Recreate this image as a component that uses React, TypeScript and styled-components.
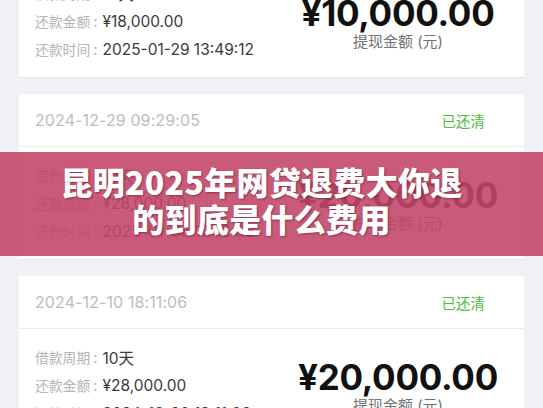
import React from 'react';
import styled, { createGlobalStyle } from 'styled-components';

const GlobalStyle = createGlobalStyle`
  html, body {
    margin: 0;
    padding: 0;
    background: #f0f1f5;
    font-family: Inter, "Noto Sans CJK SC", sans-serif;
  }
  body {
    width: 543px;
    height: 408px;
    overflow: hidden;
  }
`;

const Page = styled.div`
  position: relative;
  width: 543px;
  height: 408px;
  overflow: hidden;
`;

const List = styled.div`
  display: flex;
  flex-direction: column;
  gap: 16px;
  padding: 0 19px;
  margin-top: -88px;
`;

const Card = styled.div`
  background: #fff;
  border-bottom: 1px solid #e4e5e9;
`;

const CardHeader = styled.div`
  height: 52px;
  display: flex;
  align-items: center;
  justify-content: space-between;
  padding: 0 39px 0 16px;
  border-bottom: 1px solid #ebebeb;
`;

const DateText = styled.span`
  font-size: 16px;
  color: #bcbcbc;
  letter-spacing: 0.1px;
`;

const Status = styled.span`
  font-size: 14.5px;
  color: #4dbb41;
`;

const CardBody = styled.div`
  height: 112px;
  display: flex;
  align-items: center;
  justify-content: space-between;
  padding: 0 16px;
`;

const InfoList = styled.div`
  display: flex;
  flex-direction: column;
`;

const InfoRow = styled.div`
  height: 28px;
  display: flex;
  align-items: center;
`;

const Label = styled.span`
  font-size: 13.8px;
  color: #b4b4b4;
`;

const Colon = styled.span`
  font-size: 15px;
  color: #b4b4b4;
  margin: 0 5px 0 3px;
`;

const Value = styled.span`
  font-size: 15.5px;
  color: #3a3a3a;
`;

const AmountBlock = styled.div`
  width: 220px;
  display: flex;
  flex-direction: column;
  align-items: center;
`;

const Amount = styled.div`
  font-size: 35px;
  font-weight: 700;
  color: #111;
  line-height: 38px;
  padding-top: 4px;
  letter-spacing: -0.3px;
`;

const AmountLabel = styled.div`
  font-size: 15px;
  line-height: 20px;
  color: #727272;
`;

const Banner = styled.div`
  position: absolute;
  left: 0;
  right: 0;
  top: 152px;
  height: 104px;
  box-sizing: border-box;
  padding: 0 20px 8px 0;
  background: rgba(194, 70, 106, 0.89);
  display: flex;
  flex-direction: column;
  align-items: center;
  justify-content: center;
`;

const Title = styled.div`
  color: #fff;
  font-family: "Noto Sans CJK SC", sans-serif;
  font-weight: 900;
  font-size: 32px;
  line-height: 37px;
  text-align: center;
  text-shadow: 1px 1px 2px rgba(60, 0, 20, 0.45);
  letter-spacing: 0.3px;
`;

type Row = { label: string; value: string };

type Record = {
  date?: string;
  rows: Row[];
  amount: string;
};

const records: Record[] = [
  {
    date: '2025-01-29 13:49:12',
    rows: [
      { label: '借款周期', value: '10天' },
      { label: '还款金额', value: '¥18,000.00' },
      { label: '还款时间', value: '2025-01-29 13:49:12' },
    ],
    amount: '¥10,000.00',
  },
  {
    date: '2024-12-29 09:29:05',
    rows: [
      { label: '借款周期', value: '10天' },
      { label: '还款金额', value: '¥28,000.00' },
      { label: '还款时间', value: '2025-01-08 10:12:30' },
    ],
    amount: '¥20,000.00',
  },
  {
    date: '2024-12-10 18:11:06',
    rows: [
      { label: '借款周期', value: '10天' },
      { label: '还款金额', value: '¥28,000.00' },
      { label: '还款时间', value: '2024-12-20 18:11:06' },
    ],
    amount: '¥20,000.00',
  },
];

const RecordCard: React.FC<{ record: Record }> = ({ record }) => (
  <Card>
    <CardHeader>
      <DateText>{record.date}</DateText>
      <Status>已还清</Status>
    </CardHeader>
    <CardBody>
      <InfoList>
        {record.rows.map((r) => (
          <InfoRow key={r.label}>
            <Label>{r.label}</Label>
            <Colon>:</Colon>
            <Value>{r.value}</Value>
          </InfoRow>
        ))}
      </InfoList>
      <AmountBlock>
        <Amount>{record.amount}</Amount>
        <AmountLabel>提现金额 (元)</AmountLabel>
      </AmountBlock>
    </CardBody>
  </Card>
);

export default function App() {
  return (
    <Page>
      <GlobalStyle />
      <List>
        {records.map((r, i) => (
          <RecordCard key={i} record={r} />
        ))}
      </List>
      <Banner>
        <Title>昆明2025年网贷退费大你退</Title>
        <Title>的到底是什么费用</Title>
      </Banner>
    </Page>
  );
}
